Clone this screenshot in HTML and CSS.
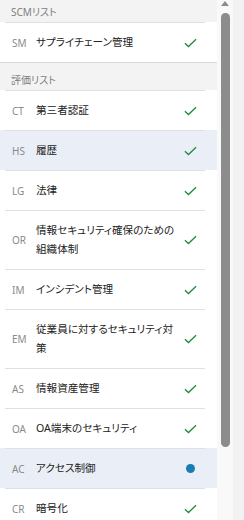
FILE: index.html
```html
<!DOCTYPE html>
<html lang="ja">
<head>
  <meta charset="UTF-8" />
  <meta name="viewport" content="width=device-width, initial-scale=1.0"/>
  <title>評価リスト</title>
  <link rel="stylesheet" href="styles.css">
</head>
<body>

  <div class="frame">
    <div class="list">
      <div class="section">SCMリスト</div>
      <div class="item"><div class="item-inner">
        <span class="code">SM</span><span class="name">サプライチェーン管理</span>
        <span class="state"><svg class="check" viewBox="0 0 14 10"><path d="M1 5.2 L4.8 8.8 L13 1"/></svg></span>
      </div></div>

      <div class="section">評価リスト</div>
      <div class="item"><div class="item-inner">
        <span class="code">CT</span><span class="name">第三者認証</span>
        <span class="state"><svg class="check" viewBox="0 0 14 10"><path d="M1 5.2 L4.8 8.8 L13 1"/></svg></span>
      </div></div>
      <div class="item active"><div class="item-inner">
        <span class="code">HS</span><span class="name">履歴</span>
        <span class="state"><svg class="check" viewBox="0 0 14 10"><path d="M1 5.2 L4.8 8.8 L13 1"/></svg></span>
      </div></div>
      <div class="item"><div class="item-inner">
        <span class="code">LG</span><span class="name">法律</span>
        <span class="state"><svg class="check" viewBox="0 0 14 10"><path d="M1 5.2 L4.8 8.8 L13 1"/></svg></span>
      </div></div>
      <div class="item"><div class="item-inner">
        <span class="code">OR</span><span class="name">情報セキュリティ確保のための<br>組織体制</span>
        <span class="state"><svg class="check" viewBox="0 0 14 10"><path d="M1 5.2 L4.8 8.8 L13 1"/></svg></span>
      </div></div>
      <div class="item"><div class="item-inner">
        <span class="code">IM</span><span class="name">インシデント管理</span>
        <span class="state"><svg class="check" viewBox="0 0 14 10"><path d="M1 5.2 L4.8 8.8 L13 1"/></svg></span>
      </div></div>
      <div class="item"><div class="item-inner">
        <span class="code">EM</span><span class="name">従業員に対するセキュリティ対<br>策</span>
        <span class="state"><svg class="check" viewBox="0 0 14 10"><path d="M1 5.2 L4.8 8.8 L13 1"/></svg></span>
      </div></div>
      <div class="item"><div class="item-inner">
        <span class="code">AS</span><span class="name">情報資産管理</span>
        <span class="state"><svg class="check" viewBox="0 0 14 10"><path d="M1 5.2 L4.8 8.8 L13 1"/></svg></span>
      </div></div>
      <div class="item"><div class="item-inner">
        <span class="code">OA</span><span class="name">OA端末のセキュリティ</span>
        <span class="state"><svg class="check" viewBox="0 0 14 10"><path d="M1 5.2 L4.8 8.8 L13 1"/></svg></span>
      </div></div>
      <div class="item active"><div class="item-inner">
        <span class="code">AC</span><span class="name">アクセス制御</span>
        <span class="state"><span class="dot"></span></span>
      </div></div>
      <div class="item"><div class="item-inner">
        <span class="code">CR</span><span class="name">暗号化</span>
        <span class="state"><svg class="check" viewBox="0 0 14 10"><path d="M1 5.2 L4.8 8.8 L13 1"/></svg></span>
      </div></div>
    </div>

    <div class="scrollbar">
      <div class="arrow-up"></div>
      <div class="thumb"></div>
    </div>
  </div>

</body>
</html>
```

FILE: styles.css
```css
body {
  font-family: "Noto Sans", "Noto Sans CJK JP", sans-serif;
  margin: 0;
  padding: 0;
  background: #f2f2f2;
  height: 520px;
  overflow: hidden;
}

.frame {
  display: flex;
  height: 520px;
  overflow: hidden;
}

.list {
  width: 217px;
  flex-shrink: 0;
  background: #ffffff;
  margin-top: -6px;
}

.section {
  height: 28px;
  box-sizing: border-box;
  padding: 10px 11px 0;
  line-height: 14px;
  font-size: 10px;
  color: #808080;
  background: #f3f3f3;
  border-top: 1px solid #dcdcdc;
  font-feature-settings: "palt";
}

.item {
  background: #ffffff;
}

.item.active {
  background: #eaeff7;
}

.item-inner {
  display: flex;
  align-items: center;
  margin: 0 12px 0 5px;
  padding: 10px 0 10px 7px;
  border-top: 1px solid #e0e0e0;
}

.code {
  width: 24px;
  flex-shrink: 0;
  font-size: 10px;
  color: #8a8a8a;
}

.name {
  flex: 1;
  font-size: 10.6px;
  line-height: 19px;
  color: #222222;
  white-space: nowrap;
  font-feature-settings: "palt";
}

.state {
  width: 20px;
  flex-shrink: 0;
  display: flex;
  justify-content: center;
  padding-right: 5px;
}

.check {
  width: 13px;
  height: 10px;
  fill: none;
  stroke: #1f8a3b;
  stroke-width: 1.4;
}

.dot {
  width: 9px;
  height: 9px;
  border-radius: 50%;
  background: #1a7cb0;
}

.scrollbar {
  width: 16px;
  flex-shrink: 0;
  background: #f9f9f9;
  display: flex;
  flex-direction: column;
  align-items: center;
  padding-top: 1px;
}

.arrow-up {
  width: 0;
  height: 0;
  border-left: 4.5px solid transparent;
  border-right: 4.5px solid transparent;
  border-bottom: 5px solid #8c8c8c;
}

.thumb {
  width: 9px;
  height: 434px;
  margin-top: 7px;
  border-radius: 5px;
  background: #8c8c8c;
}
```
